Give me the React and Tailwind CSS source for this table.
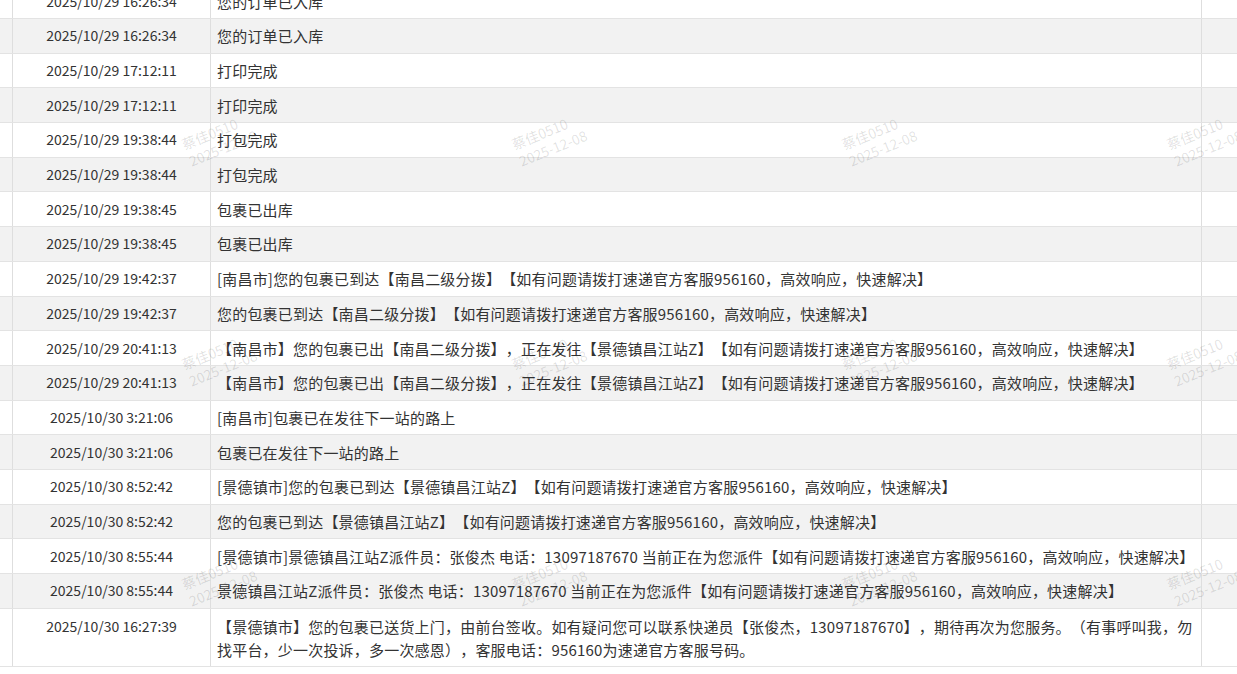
import React from "react";

const rows = [
  ["2025/10/29 16:26:34", "您的订单已入库"],
  ["2025/10/29 16:26:34", "您的订单已入库"],
  ["2025/10/29 17:12:11", "打印完成"],
  ["2025/10/29 17:12:11", "打印完成"],
  ["2025/10/29 19:38:44", "打包完成"],
  ["2025/10/29 19:38:44", "打包完成"],
  ["2025/10/29 19:38:45", "包裹已出库"],
  ["2025/10/29 19:38:45", "包裹已出库"],
  ["2025/10/29 19:42:37", "[南昌市]您的包裹已到达【南昌二级分拨】【如有问题请拨打速递官方客服956160，高效响应，快速解决】"],
  ["2025/10/29 19:42:37", "您的包裹已到达【南昌二级分拨】【如有问题请拨打速递官方客服956160，高效响应，快速解决】"],
  ["2025/10/29 20:41:13", "【南昌市】您的包裹已出【南昌二级分拨】，正在发往【景德镇昌江站Z】【如有问题请拨打速递官方客服956160，高效响应，快速解决】"],
  ["2025/10/29 20:41:13", "【南昌市】您的包裹已出【南昌二级分拨】，正在发往【景德镇昌江站Z】【如有问题请拨打速递官方客服956160，高效响应，快速解决】"],
  ["2025/10/30 3:21:06", "[南昌市]包裹已在发往下一站的路上"],
  ["2025/10/30 3:21:06", "包裹已在发往下一站的路上"],
  ["2025/10/30 8:52:42", "[景德镇市]您的包裹已到达【景德镇昌江站Z】【如有问题请拨打速递官方客服956160，高效响应，快速解决】"],
  ["2025/10/30 8:52:42", "您的包裹已到达【景德镇昌江站Z】【如有问题请拨打速递官方客服956160，高效响应，快速解决】"],
  ["2025/10/30 8:55:44", "[景德镇市]景德镇昌江站Z派件员：张俊杰 电话：13097187670 当前正在为您派件【如有问题请拨打速递官方客服956160，高效响应，快速解决】"],
  ["2025/10/30 8:55:44", "景德镇昌江站Z派件员：张俊杰 电话：13097187670 当前正在为您派件【如有问题请拨打速递官方客服956160，高效响应，快速解决】"],
];

const marks = [
  [170, 124], [500, 124], [830, 124], [1155, 124],
  [170, 344], [500, 344], [830, 344], [1155, 344],
  [170, 564], [500, 564], [830, 564], [1155, 564],
];

function Row({ time, children, gray, last }) {
  return (
    <div className={`flex items-start border-b border-[#e3e3e3] ${gray ? "bg-[#f2f2f2]" : "bg-white"}`}>
      <div className="w-[13px] self-stretch border-r border-[#dedede]" />
      <div className={`w-[198px] self-stretch border-r border-[#dedede] text-center text-[14px] leading-[23px] ${last ? "pt-[6px] pb-[5.7px]" : "py-[5.35px]"}`}>
        {time}
      </div>
      <div className={`w-[991px] self-stretch border-r border-[#dedede] pl-[6px] pr-[4px] text-[15px] leading-[23px] tracking-[0.2px] whitespace-nowrap [text-spacing-trim:space-all] ${last ? "pt-[6px] pb-[5.7px]" : "py-[5.35px]"}`}>
        {children}
      </div>
      <div className="flex-1 self-stretch" />
    </div>
  );
}

export default function App() {
  return (
    <div
      className="relative h-[674px] w-[1237px] overflow-hidden bg-white text-[#333]"
      style={{ fontFamily: '"Noto Sans CJK SC", "Noto Sans", sans-serif' }}
    >
      <div className="-mt-[15.7px]">
        {rows.map((r, i) => (
          <Row key={i} time={r[0]} gray={i % 2 === 1}>
            {r[1]}
          </Row>
        ))}
        <Row time="2025/10/30 16:27:39" last>
          【景德镇市】您的包裹已送货上门，由前台签收。如有疑问您可以联系快递员【张俊杰，13097187670】，期待再次为您服务。（有事呼叫我，勿
          <br />
          找平台，少一次投诉，多一次感恩），客服电话：956160为速递官方客服号码。
        </Row>
      </div>
      {marks.map(([x, y], i) => (
        <div
          key={i}
          className="pointer-events-none absolute flex -rotate-[22deg] flex-col items-center whitespace-nowrap text-[14px] leading-[18px] text-black/[0.12]"
          style={{ left: x, top: y }}
        >
          <span>蔡佳0510</span>
          <span className="ml-[14px]">2025-12-08</span>
        </div>
      ))}
    </div>
  );
}
